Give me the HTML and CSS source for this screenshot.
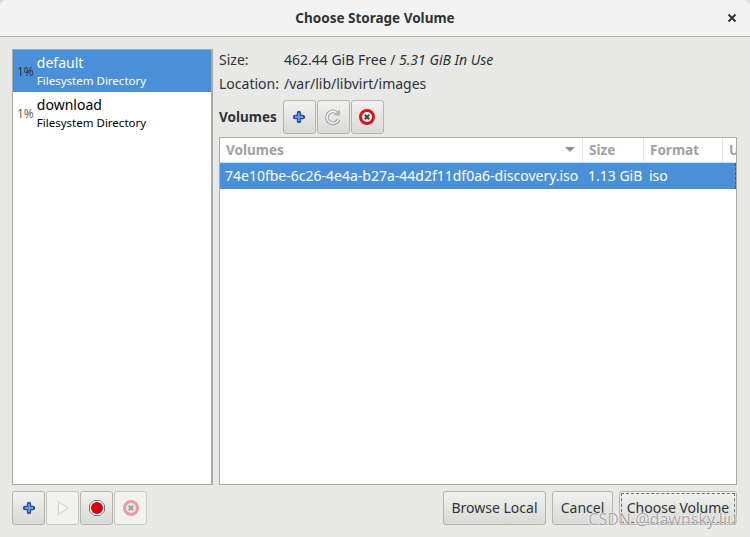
FILE: index.html
```html
<!DOCTYPE html>
<html lang="en">
<head>
    <meta charset="UTF-8">
    <title>Choose Storage Volume</title>
    <link rel="stylesheet" href="styles.css">
</head>
<body>
    <div class="dialog">
        <header class="titlebar">
            <h1>Choose Storage Volume</h1>
            <svg class="close" width="10" height="10" viewBox="0 0 10 10"><path d="M1.5 1.5l7 7M8.5 1.5l-7 7" stroke="#2e3436" stroke-width="2"/></svg>
        </header>
        <main class="content">
            <aside class="sidebar">
                <ul class="pools">
                    <li class="pool selected">
                        <span class="usage">1%</span>
                        <div><div class="pool-name">default</div><div class="pool-type">Filesystem Directory</div></div>
                    </li>
                    <li class="pool">
                        <span class="usage">1%</span>
                        <div><div class="pool-name">download</div><div class="pool-type">Filesystem Directory</div></div>
                    </li>
                </ul>
            </aside>
            <section class="details">
                <div class="info-row"><span class="info-label">Size:</span><span>462.44 GiB Free / <em>5.31 GiB In Use</em></span></div>
                <div class="info-row"><span class="info-label">Location:</span><span>/var/lib/libvirt/images</span></div>
                <div class="volumes-bar">
                    <strong>Volumes</strong>
                    <div class="btn-group">
                        <button class="icon-btn"><svg width="18" height="18" viewBox="0 0 18 18"><path d="M9 5v8M5 9h8" stroke="#23599f" stroke-width="4.4" stroke-linecap="round"/><path d="M9 5v8M5 9h8" stroke="#6a98d2" stroke-width="1.8"/></svg></button>
                        <button class="icon-btn"><svg width="18" height="18" viewBox="0 0 18 18"><path d="M13.5 5.5A6 6 0 1 0 14.5 11.5" fill="none" stroke="#a0a0a0" stroke-width="3.6"/><path d="M13.5 5.5A6 6 0 1 0 14.5 11.5" fill="none" stroke="#f2f2f2" stroke-width="1.6"/><path d="M9.5 7.5h6.5V1.500z" fill="#b4b4b4"/></svg></button>
                        <button class="icon-btn"><svg width="18" height="18" viewBox="0 0 18 18"><circle cx="9" cy="9" r="6.5" fill="#f4f4f4" stroke="#d9141c" stroke-width="3"/><path d="M6.8 6.8l4.4 4.4M11.2 6.8l-4.4 4.4" stroke="#444" stroke-width="2.2"/></svg></button>
                    </div>
                </div>
                <div class="table-box">
                    <div class="table-head">
                        <div class="col col-name">Volumes<span class="sort-arrow"></span></div>
                        <div class="col col-size">Size</div>
                        <div class="col col-format">Format</div>
                        <div class="col col-used">U</div>
                    </div>
                    <div class="table-row">
                        <div class="cell col-name">74e10fbe-6c26-4e4a-b27a-44d2f11df0a6-discovery.iso</div>
                        <div class="cell col-size">1.13 GiB</div>
                        <div class="cell col-format">iso</div>
                        <div class="cell col-used"></div>
                    </div>
                </div>
            </section>
        </main>
        <footer class="actions">
            <div class="btn-group">
                <button class="icon-btn"><svg width="18" height="18" viewBox="0 0 18 18"><path d="M9 5v8M5 9h8" stroke="#23599f" stroke-width="4.4" stroke-linecap="round"/><path d="M9 5v8M5 9h8" stroke="#6a98d2" stroke-width="1.8"/></svg></button>
                <button class="icon-btn off"><svg width="18" height="18" viewBox="0 0 18 18"><path d="M4.5 2.5L14 9l-9.5 6.5z" fill="#f6f6f6" stroke="#cfcfcf"/></svg></button>
                <button class="icon-btn"><svg width="18" height="18" viewBox="0 0 18 18"><path d="M6 1.5h6L16.5 6v6L12 16.5H6L1.5 12V6z" fill="#fff" stroke="#777"/><circle cx="9" cy="9" r="6" fill="#d8000c"/></svg></button>
                <button class="icon-btn off"><svg width="18" height="18" viewBox="0 0 18 18"><circle cx="9" cy="9" r="6.5" fill="#e8e8e8" stroke="#eb9a9d" stroke-width="3"/><path d="M6.8 6.8l4.4 4.4M11.2 6.8l-4.4 4.4" stroke="#a2a2a2" stroke-width="2.2"/></svg></button>
            </div>
            <div class="main-actions">
                <button class="text-btn browse">Browse Local</button>
                <button class="text-btn cancel">Cancel</button>
                <button class="text-btn choose">Choose Volume</button>
            </div>
        </footer>
        <div class="watermark">CSDN @dawnsky.liu</div>
    </div>
</body>
</html>
```

FILE: styles.css
```css
* {
    box-sizing: border-box;
}
html, body {
    margin: 0;
    padding: 0;
    background-color: #dedede;
}
body {
    font-family: "Noto Sans", sans-serif;
    font-size: 14px;
    color: #2e3436;
}
.dialog {
    position: relative;
    width: 750px;
    height: 537px;
    display: flex;
    flex-direction: column;
    background-color: #e8e8e7;
    border-radius: 7px 7px 0 0;
    overflow: hidden;
}
.titlebar {
    height: 37px;
    flex: none;
    display: flex;
    align-items: center;
    justify-content: center;
    background-color: #f3f3f3;
    border-bottom: 1px solid #b0afa9;
}
.titlebar h1 {
    margin: 0;
    font-size: 13.5px;
    font-weight: bold;
}
.close {
    position: absolute;
    top: 13px;
    right: 13px;
}
.content {
    display: flex;
    gap: 6px;
    height: 448px;
    padding: 12px 13px 0 12px;
}
.sidebar {
    width: 201px;
    flex: none;
    background-color: #fff;
    border: 1px solid #a9aaa6;
    border-right-width: 2px;
}
.pools {
    list-style: none;
    margin: 0;
    padding: 0;
}
.pool {
    height: 42px;
    display: flex;
    align-items: center;
    gap: 3px;
    padding-left: 4px;
    color: #000;
}
.pool.selected {
    background-color: #4a90d9;
    color: #fff;
}
.usage {
    font-size: 12px;
    color: #666;
}
.selected .usage {
    color: #2e3436;
}
.pool-name {
    font-size: 14px;
    line-height: 18px;
}
.pool-type {
    font-size: 11.5px;
    line-height: 17px;
}
.details {
    flex: 1;
    min-width: 0;
    display: flex;
    flex-direction: column;
    margin-top: -1px;
}
.info-row {
    display: flex;
    height: 24px;
    align-items: center;
    color: #2e3436;
}
.info-label {
    width: 65px;
}
.volumes-bar {
    display: flex;
    align-items: center;
    gap: 6px;
    height: 34px;
    margin: 4px 0 3px;
}
.volumes-bar strong {
    font-size: 13.5px;
}
.btn-group {
    display: flex;
    gap: 1px;
}
.icon-btn, .text-btn {
    height: 34px;
    padding: 0 0 2px;
    display: flex;
    align-items: center;
    justify-content: center;
    font-family: inherit;
    font-size: 14px;
    color: #2e3436;
    border: 1px solid #b4b4b0;
    border-radius: 3px;
    background-image: linear-gradient(#f1f1f0, #d9d9d7);
}
.icon-btn {
    width: 33px;
    padding: 0;
}
.icon-btn.off {
    background-image: none;
    background-color: #f1f1f0;
    border-color: #c9c9c6;
}
.table-box {
    height: 349px;
    background-color: #fff;
    border: 1px solid #a9aaa6;
    overflow: hidden;
}
.table-head, .table-row {
    display: flex;
}
.table-head {
    height: 25px;
    font-size: 13.5px;
    font-weight: bold;
    color: #a0a2a0;
    border-bottom: 1px solid #dcdcdb;
}
.col {
    display: flex;
    flex: none;
    align-items: center;
    padding-left: 6px;
    border-right: 1px solid #e4e4e3;
}
.col-name {
    flex: none;
    width: 363px;
    justify-content: space-between;
}
.col-size {
    flex: none;
    width: 61px;
}
.col-format {
    flex: none;
    width: 79px;
}
.col-used {
    flex: 1;
    border-right: none;
}
.sort-arrow {
    width: 0;
    height: 0;
    margin-right: 7px;
    border-left: 5px solid transparent;
    border-right: 5px solid transparent;
    border-top: 5px solid #8f9290;
}
.table-row {
    height: 26px;
    background-color: #4a90d9;
    color: #fff;
}
.table-row .col-used {
    border-right: 1px dashed #2b5f9b;
}
.cell {
    display: flex;
    align-items: center;
    padding-left: 5px;
    white-space: nowrap;
}
.actions {
    display: flex;
    justify-content: space-between;
    padding: 6px 13px 0 12px;
}
.main-actions {
    display: flex;
    gap: 6px;
}
.browse {
    width: 103px;
}
.cancel {
    width: 61px;
}
.choose {
    width: 118px;
    outline: 1px dashed #6f7270;
    outline-offset: -3px;
}
.watermark {
    position: absolute;
    right: 13px;
    top: 509px;
    font-size: 16px;
    line-height: 20px;
    color: rgba(140, 140, 140, 0.75);
    text-shadow: 0 0 2px #fff, 0 0 1px #fff;
}
```
